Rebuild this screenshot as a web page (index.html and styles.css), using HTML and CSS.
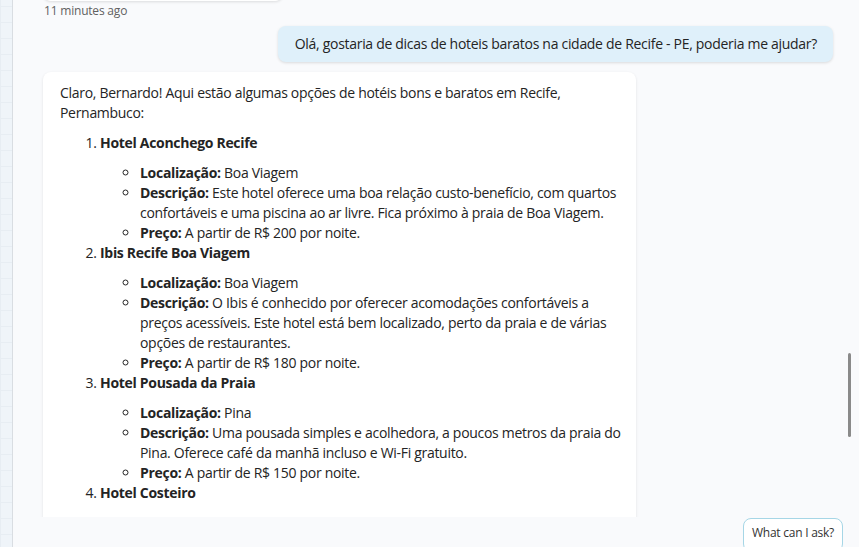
FILE: index.html
```html
<!DOCTYPE html>
<html lang="pt">
<head>
<meta charset="utf-8">
<title>Chat</title>
<link rel="stylesheet" href="styles.css">
</head>
<body>
<div class="app">
  <div class="rail"></div>
  <div class="main">
    <div class="scroll">
      <div class="prev-card"></div>
      <div class="time">11 minutes ago</div>
      <div class="user-row">
        <div class="bubble">Olá, gostaria de dicas de hoteis baratos na cidade de Recife - PE, poderia me ajudar?</div>
      </div>
      <div class="card">
        <p class="intro">Claro, Bernardo! Aqui estão algumas opções de hotéis bons e baratos em Recife,<br>Pernambuco:</p>
        <ol class="hotels">
          <li><strong>Hotel Aconchego Recife</strong>
            <ul class="details">
              <li><strong>Localização:</strong> Boa Viagem</li>
              <li><strong>Descrição:</strong> Este hotel oferece uma boa relação custo-benefício, com quartos<br>confortáveis e uma piscina ao ar livre. Fica próximo à praia de Boa Viagem.</li>
              <li><strong>Preço:</strong> A partir de R$ 200 por noite.</li>
            </ul>
          </li>
          <li><strong>Ibis Recife Boa Viagem</strong>
            <ul class="details">
              <li><strong>Localização:</strong> Boa Viagem</li>
              <li><strong>Descrição:</strong> O Ibis é conhecido por oferecer acomodações confortáveis a<br>preços acessíveis. Este hotel está bem localizado, perto da praia e de várias<br>opções de restaurantes.</li>
              <li><strong>Preço:</strong> A partir de R$ 180 por noite.</li>
            </ul>
          </li>
          <li><strong>Hotel Pousada da Praia</strong>
            <ul class="details">
              <li><strong>Localização:</strong> Pina</li>
              <li><strong>Descrição:</strong> Uma pousada simples e acolhedora, a poucos metros da praia do<br>Pina. Oferece café da manhã incluso e Wi-Fi gratuito.</li>
              <li><strong>Preço:</strong> A partir de R$ 150 por noite.</li>
            </ul>
          </li>
          <li><strong>Hotel Costeiro</strong></li>
        </ol>
      </div>
      <div class="scrollbar"></div>
    </div>
    <div class="footer">
      <button class="ask">What can I ask?</button>
    </div>
  </div>
</div>
</body>
</html>
```

FILE: styles.css
```css
* { box-sizing: border-box; }
html, body { margin: 0; padding: 0; }
body {
  width: 859px;
  height: 547px;
  overflow: hidden;
  background: #f9fafc;
  font-family: "Open Sans", "Noto Sans", sans-serif;
  color: #242424;
}
.app {
  display: flex;
  height: 547px;
}
.rail {
  width: 13px;
  flex: none;
  border-right: 1px solid #d9dde2;
  background-color: #eff4f9;
  background-image:
    linear-gradient(#e7edf3 1px, transparent 1px),
    linear-gradient(90deg, #e7edf3 1px, transparent 1px);
  background-size: 16px 16px;
  background-position: 0 6px;
}
.main {
  flex: 1;
  display: flex;
  flex-direction: column;
  min-width: 0;
}
.scroll {
  position: relative;
  height: 517px;
  flex: none;
  overflow: hidden;
  padding: 0 26px 0 30px;
}
.prev-card {
  width: 240px;
  height: 40px;
  margin-top: -39px;
  background: #ffffff;
  border-radius: 8px;
  box-shadow: 0 1px 3px rgba(0,0,0,0.12);
}
.time {
  margin-top: 2px;
  padding-left: 1px;
  font-size: 12px;
  line-height: 16px;
  color: #616161;
  letter-spacing: -0.2px;
}
.user-row {
  display: flex;
  justify-content: flex-end;
  margin-top: 7px;
}
.bubble {
  background: #dff0fa;
  border-radius: 8px;
  padding: 8px 16px 8px 17px;
  font-size: 14px;
  line-height: 20px;
  letter-spacing: -0.3px;
  box-shadow: 0 1px 3px rgba(0,0,0,0.13);
}
.card {
  margin-top: 10px;
  width: 593px;
  background: #ffffff;
  border-radius: 8px;
  padding: 11px 17px 40px 17px;
  box-shadow: 0 1px 3px rgba(0,0,0,0.1);
  font-size: 14px;
  line-height: 20px;
  letter-spacing: -0.3px;
}
.intro {
  margin: 0;
}
.hotels {
  margin: 10px 0 0 0;
  padding-left: 40px;
}
.hotels strong {
  font-weight: 700;
}
.details {
  margin: 10px 0 0 0;
  padding-left: 40px;
  list-style-type: circle;
  white-space: nowrap;
}
.scrollbar {
  position: absolute;
  right: 8px;
  top: 353px;
  width: 3px;
  height: 84px;
  border-radius: 2px;
  background: #8a8a8a;
}
.footer {
  flex: 1;
  display: flex;
  justify-content: flex-end;
  align-items: flex-start;
  padding: 1px 16px 0 0;
}
.ask {
  font-family: "Open Sans", "Noto Sans", sans-serif;
  font-size: 12px;
  letter-spacing: -0.25px;
  color: #333333;
  background: #ffffff;
  border: 1px solid #a6d6e6;
  border-radius: 8px;
  height: 34px;
  padding: 0 8px 4px 8px;
  line-height: 28px;
}
```
